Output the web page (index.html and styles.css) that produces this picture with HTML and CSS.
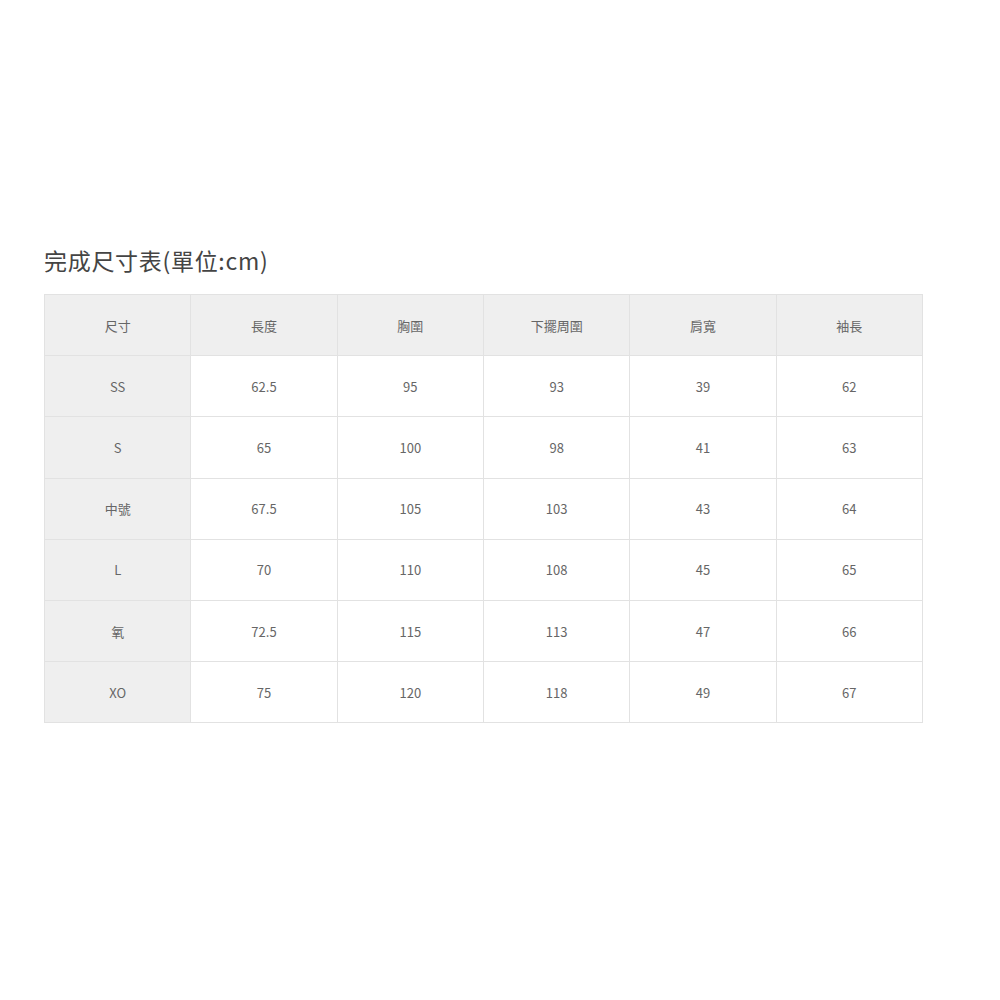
FILE: index.html
```html
<!DOCTYPE html>
<html lang="zh-Hant">
<head>
<meta charset="utf-8">
<link rel="stylesheet" href="styles.css">
</head>
<body>
<div class="page">
  <h2 class="title">完成尺寸表(單位:cm)</h2>
  <table class="size-table">
    <thead>
      <tr><th>尺寸</th><th>長度</th><th>胸圍</th><th>下擺周圍</th><th>肩寬</th><th>袖長</th></tr>
    </thead>
    <tbody>
      <tr><th>SS</th><td>62.5</td><td>95</td><td>93</td><td>39</td><td>62</td></tr>
      <tr><th>S</th><td>65</td><td>100</td><td>98</td><td>41</td><td>63</td></tr>
      <tr><th>中號</th><td>67.5</td><td>105</td><td>103</td><td>43</td><td>64</td></tr>
      <tr><th>L</th><td>70</td><td>110</td><td>108</td><td>45</td><td>65</td></tr>
      <tr><th>氧</th><td>72.5</td><td>115</td><td>113</td><td>47</td><td>66</td></tr>
      <tr><th>XO</th><td>75</td><td>120</td><td>118</td><td>49</td><td>67</td></tr>
    </tbody>
  </table>
</div>
</body>
</html>
```
FILE: styles.css
```css
html, body {
  margin: 0;
  padding: 0;
  background: #ffffff;
}
body {
  font-family: "Noto Sans CJK TC", "Noto Sans", sans-serif;
  color: #666;
}
.page {
  padding: 243px 0 0 44px;
}
.title {
  margin: 0 0 17px 0;
  font-size: 23px;
  letter-spacing: 0.7px;
  font-weight: 400;
  line-height: 34px;
  color: #444;
}
.size-table {
  border-collapse: collapse;
  width: 879px;
  table-layout: fixed;
  font-size: 13px;
}
.size-table th,
.size-table td {
  height: 60.2px;
  padding: 0;
  text-align: center;
  vertical-align: middle;
  font-weight: 400;
  color: #666;
  border: 1px solid #e2e2e2;
}
.size-table thead th,
.size-table tbody th {
  background: #efefef;
}
.size-table td {
  background: #fff;
}
```
